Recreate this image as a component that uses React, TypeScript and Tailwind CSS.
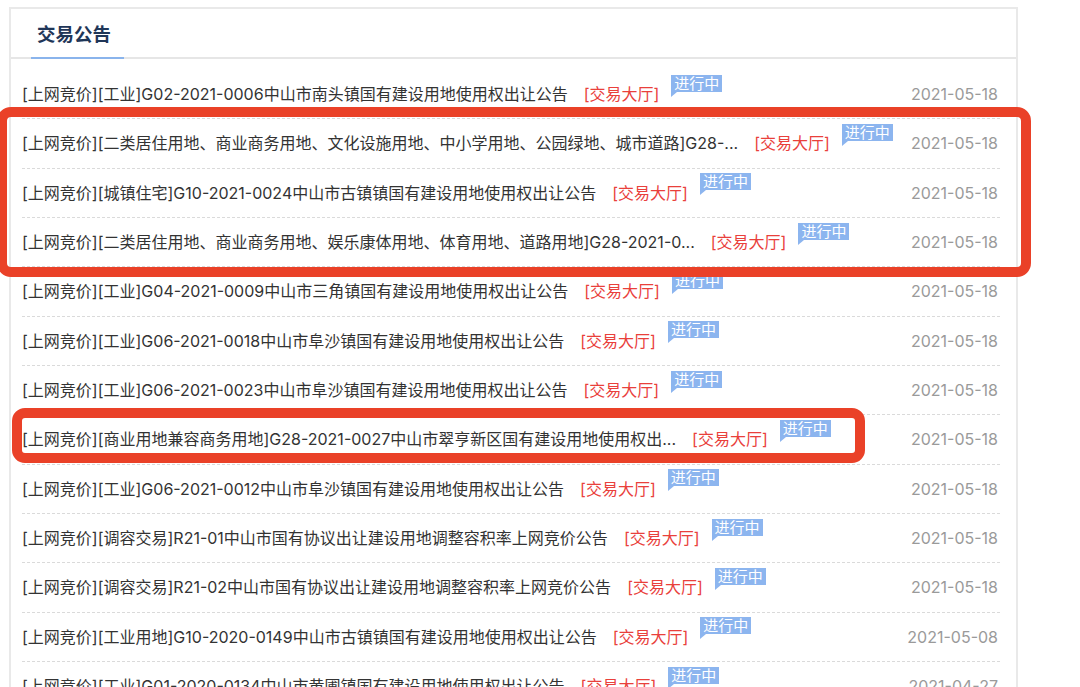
import React from "react";

type Row = { title: string; date: string };

const rows: Row[] = [
  { title: "[上网竞价][工业]G02-2021-0006中山市南头镇国有建设用地使用权出让公告", date: "2021-05-18" },
  { title: "[上网竞价][二类居住用地、商业商务用地、文化设施用地、中小学用地、公园绿地、城市道路]G28-...", date: "2021-05-18" },
  { title: "[上网竞价][城镇住宅]G10-2021-0024中山市古镇镇国有建设用地使用权出让公告", date: "2021-05-18" },
  { title: "[上网竞价][二类居住用地、商业商务用地、娱乐康体用地、体育用地、道路用地]G28-2021-0...", date: "2021-05-18" },
  { title: "[上网竞价][工业]G04-2021-0009中山市三角镇国有建设用地使用权出让公告", date: "2021-05-18" },
  { title: "[上网竞价][工业]G06-2021-0018中山市阜沙镇国有建设用地使用权出让公告", date: "2021-05-18" },
  { title: "[上网竞价][工业]G06-2021-0023中山市阜沙镇国有建设用地使用权出让公告", date: "2021-05-18" },
  { title: "[上网竞价][商业用地兼容商务用地]G28-2021-0027中山市翠亨新区国有建设用地使用权出...", date: "2021-05-18" },
  { title: "[上网竞价][工业]G06-2021-0012中山市阜沙镇国有建设用地使用权出让公告", date: "2021-05-18" },
  { title: "[上网竞价][调容交易]R21-01中山市国有协议出让建设用地调整容积率上网竞价公告", date: "2021-05-18" },
  { title: "[上网竞价][调容交易]R21-02中山市国有协议出让建设用地调整容积率上网竞价公告", date: "2021-05-18" },
  { title: "[上网竞价][工业用地]G10-2020-0149中山市古镇镇国有建设用地使用权出让公告", date: "2021-05-08" },
  { title: "[上网竞价][工业]G01-2020-0134中山市黄圃镇国有建设用地使用权出让公告", date: "2021-04-27" },
];

function Badge() {
  return (
    <span className="relative ml-[12px] -translate-y-[11px] inline-flex">
      <span className="h-[17px] px-[3px] bg-[#8cb5ef] text-white text-[15px] leading-[17px] whitespace-nowrap">
        进行中
      </span>
      <span className="absolute left-0 top-[17px] w-0 h-0 border-t-[5px] border-t-[#8cb5ef] border-r-[6px] border-r-transparent" />
    </span>
  );
}

export default function App() {
  return (
    <div
      className="relative h-[687px] w-[1080px] overflow-hidden bg-white"
      style={{ fontFamily: 'Inter, "Noto Sans CJK SC", sans-serif' }}
    >
      <div className="ml-[9px] mt-[7px] w-[1009px] border-2 border-[#e9e9e9] bg-white">
        <div className="h-[50px] border-b-2 border-[#e6e6e6] pl-[20px] flex items-end">
          <div className="h-full pl-[6px] pr-[13px] flex items-center border-b-2 border-[#8ab4ec] -mb-[2px]">
            <span className="text-[18.5px] font-bold text-[#1f3658] leading-none">交易公告</span>
          </div>
        </div>
        <div className="pt-[11px] pl-[11px] pr-[16px]">
          {rows.map((r, i) => (
            <div
              key={i}
              className="h-[49.33px] flex items-center border-b border-dashed border-[#dadada] pr-[2px] text-[16px]"
            >
              <span className="text-[#333333] whitespace-nowrap">{r.title}</span>
              <span className="ml-[16px] text-[#e9403b] whitespace-nowrap">[交易大厅]</span>
              <Badge />
              <span className="ml-auto text-[#9a9a9a] whitespace-nowrap">{r.date}</span>
            </div>
          ))}
        </div>
      </div>

      <div className="absolute left-[-3px] top-[107px] w-[1034px] h-[170px] border-[10px] border-[#ea4128] rounded-[14px] pointer-events-none" />
      <div className="absolute left-[12px] top-[408px] w-[853px] h-[55px] border-[10px] border-[#ea4128] rounded-[13px] pointer-events-none" />
    </div>
  );
}
